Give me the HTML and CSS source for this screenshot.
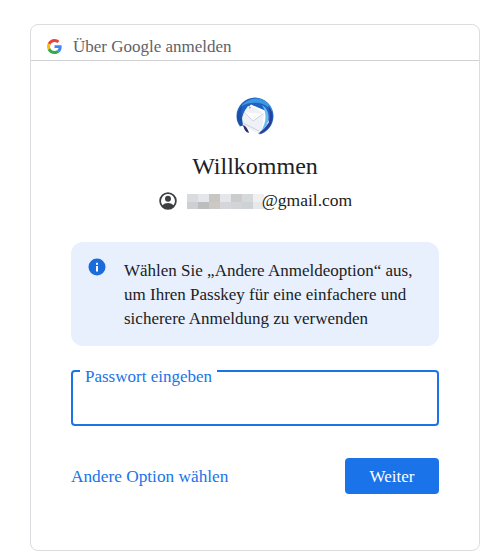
FILE: index.html
```html
<!DOCTYPE html>
<html lang="de">
<head>
    <meta charset="UTF-8">
    <meta name="viewport" content="width=device-width, initial-scale=1.0">
    <title>Über Google anmelden</title>
    <link rel="stylesheet" href="styles.css">
</head>
<body>
    <div class="card">
        <div class="card-header">
            <svg class="google-logo" viewBox="0 0 48 48" width="15" height="15">
                <path fill="#EA4335" d="M24 9.500c3.500 0 6.700 1.200 9.200 3.600l6.900-6.900C35.900 2.400 30.500 0 24 0 14.600 0 6.500 5.400 2.600 13.200l8 6.200C12.400 13.700 17.700 9.500 24 9.500z"/>
                <path fill="#4285F4" d="M46.900 24.500c0-1.600-.1-3.100-.4-4.500H24v9h12.900c-.6 3-2.200 5.500-4.800 7.200l7.700 6c4.500-4.200 7.100-10.300 7.100-17.700z"/>
                <path fill="#FBBC05" d="M10.500 28.600c-.5-1.400-.8-3-.8-4.600s.3-3.200.8-4.600l-8-6.200C.9 16.500 0 20.100 0 24s.9 7.500 2.600 10.800l7.900-6.200z"/>
                <path fill="#34A853" d="M24 48c6.500 0 11.900-2.100 15.900-5.800l-7.700-6c-2.200 1.400-4.900 2.300-8.200 2.300-6.300 0-11.600-4.200-13.500-9.900l-8 6.200C6.500 42.600 14.600 48 24 48z"/>
            </svg>
            <span class="header-title">Über Google anmelden</span>
        </div>

        <div class="card-body">
            <svg class="app-logo" viewBox="0 0 38 38" width="38" height="38">
                <!-- ring and the wing going over the top -->
                <path fill="#1f62c4" d="M19 0.500C9 .5 .5 9 .5 19c0 4 1.300 7.500 3.500 10.500l6-3-1-13 6-6 14 6 4 12-10 12c8-1.500 14.500-9.500 14.500-18.500C37.500 9 29 .5 19 .5z"/>
                <path fill="#3d97df" d="M5 9C10 3 18 0 25 2c6 2 11 7 12 14-3-5-8-9-14-10-6-1-12 0-18 3z"/>
                <path fill="#2a3f9c" d="M32 8c5 6 6 14 2 21-3 4-7 7-12 8l3-3c5-3 9-8 9-14 0-4-.7-8-2-12z"/>
                <path fill="#69bdec" d="M26 8c5 3 7 8 6.500 14-.5 5-3 9-7.500 12.500 2.500-5 4.500-9 4.500-14 0-4.500-1-8.500-3.500-12.500z"/>
                <path fill="#1c4fa8" d="M1 21c0-5 2-9 5-12-1 4-1 8 0 12 .5 3 1.500 5 3 7l-4 1c-2-2-3.500-5-4-8z"/>
                <!-- head and envelope -->
                <path fill="#eef1f6" d="M8 15l4-6 6 1 10 7-2 15-4 4-15-7-1-8z"/>
                <path fill="#fbfcfe" d="M8 15l19 2-10 7z"/>
                <path fill="none" stroke="#b9bec6" stroke-width=".6" d="M8 15l9 9 10-7M7 26l16 8"/>
                <path fill="#e8844a" d="M13.500 9l1.500 2-2 .5z"/>
                <!-- tail feathers -->
                <path fill="#2a2f6e" d="M7 28c3 1 5 4 6 8l-2.500-1c-2-2-3-4.500-3.500-7z"/>
            </svg>
            <h1 class="welcome">Willkommen</h1>
            <div class="account">
                <svg class="account-icon" viewBox="0 0 24 24" width="20" height="20">
                    <path fill="#3c4043" d="M12 1.500a10.500 10.500 0 1 0 0 21 10.500 10.500 0 0 0 0-21zm0 2.200a8.300 8.300 0 0 1 6.500 13.400C16.900 15.300 14.500 14.500 12 14.500s-4.900.8-6.500 2.600A8.300 8.300 0 0 1 12 3.700zm0 2.100a3.600 3.600 0 1 0 0 7.200 3.600 3.600 0 0 0 0-7.200z"/>
                </svg>
                <span class="blur-name">
                    <i></i><i></i><i></i><i></i><i></i><i></i><i></i>
                    <i></i><i></i><i></i><i></i><i></i><i></i><i></i>
                </span>
                <span class="email-domain">@gmail.com</span>
            </div>

            <div class="info-box">
                <svg class="info-icon" viewBox="0 0 18 18" width="18" height="18">
                    <circle cx="9" cy="9" r="8.500" fill="#1a6bdc"/>
                    <rect x="8" y="8" width="2" height="5.500" fill="#fff"/>
                    <rect x="8" y="4.800" width="2" height="2" fill="#fff"/>
                </svg>
                <p class="info-text">Wählen Sie „Andere Anmeldeoption“ aus, um Ihren Passkey für eine einfachere und sicherere Anmeldung zu verwenden</p>
            </div>

            <div class="password-field">
                <label class="password-label" for="passwordInput">Passwort eingeben</label>
                <input class="password-input" id="passwordInput" type="password">
            </div>

            <div class="actions">
                <a class="other-option" href="#">Andere Option wählen</a>
                <button class="next-btn" type="button">Weiter</button>
            </div>
        </div>
    </div>
</body>
</html>
```

FILE: styles.css
```css
* {
    margin: 0;
    padding: 0;
    box-sizing: border-box;
}

body {
    font-family: "Liberation Serif", "Times New Roman", serif;
    font-size: 17px;
    background: #fff;
    color: #202124;
    padding: 24px 20px 2px 30px;
}

.card {
    height: 527px;
    border: 1px solid #dadce0;
    border-radius: 8px;
}

.card-header {
    height: 36px;
    display: flex;
    align-items: center;
    gap: 11px;
    padding: 8px 0 0 16px;
    border-bottom: 1px solid #cfd1d4;
    color: #5f6368;
}

.card-body {
    display: flex;
    flex-direction: column;
    align-items: center;
    padding: 36px 40px 0;
}

.app-logo {
    display: block;
}

.welcome {
    margin-top: 15px;
    font-size: 24px;
    font-weight: 400;
    line-height: 32px;
}

.account {
    margin-top: 7px;
    display: flex;
    align-items: center;
    height: 24px;
}

.account-icon {
    margin-right: 9px;
}

.blur-name {
    display: grid;
    grid-template-columns: repeat(7, 11px);
    grid-auto-rows: 7.500px;
    width: 75px;
    height: 15px;
    margin-top: 1px;
}

.blur-name i:nth-child(1) { background: #d9dbdc; }
.blur-name i:nth-child(2) { background: #e3e6ea; }
.blur-name i:nth-child(3) { background: #c8c6c4; }
.blur-name i:nth-child(4) { background: #e4e6ea; }
.blur-name i:nth-child(5) { background: #cccccc; }
.blur-name i:nth-child(6) { background: #d6d8da; }
.blur-name i:nth-child(7) { background: #f0f0f0; }
.blur-name i:nth-child(8) { background: #ccd0d2; }
.blur-name i:nth-child(9) { background: #bcbdbf; }
.blur-name i:nth-child(10) { background: #ccc9c5; }
.blur-name i:nth-child(11) { background: #d4d6da; }
.blur-name i:nth-child(12) { background: #d2d4d8; }
.blur-name i:nth-child(13) { background: #ccd2d6; }
.blur-name i:nth-child(14) { background: #e8e8e8; }

.email-domain {
    font-size: 17.500px;
    margin-bottom: 2px;
}

.info-box {
    width: 100%;
    margin-top: 29px;
    display: flex;
    gap: 18px;
    padding: 16px 24px 15px 17px;
    background: #e8f0fe;
    border-radius: 12px;
}

.info-icon {
    flex: none;
}

.info-text {
    padding-top: 1px;
    line-height: 24px;
}

.password-field {
    position: relative;
    width: 100%;
    margin-top: 24px;
}

.password-label {
    position: absolute;
    left: 9px;
    top: -2px;
    padding: 0 5px 2px;
    background: #fff;
    color: #1a73e8;
    line-height: 18px;
}

.password-input {
    display: block;
    width: 100%;
    height: 56px;
    border: 2px solid #1a73e8;
    border-radius: 4px;
    outline: none;
}

.actions {
    width: 100%;
    margin-top: 32px;
    display: flex;
    align-items: center;
    justify-content: space-between;
}

.other-option {
    color: #1a73e8;
    text-decoration: none;
    font-size: 17.300px;
    padding-top: 2px;
}

.next-btn {
    width: 94px;
    height: 36px;
    padding-top: 2px;
    border: none;
    border-radius: 4px;
    background: #1a73e8;
    color: #fff;
    font-family: inherit;
    font-size: 17px;
}
```
